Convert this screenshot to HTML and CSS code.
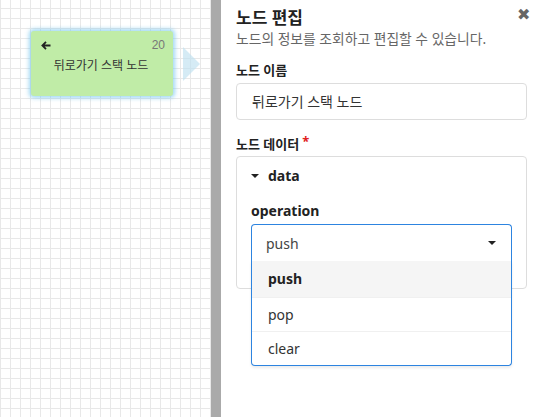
FILE: index.html
```html
<!DOCTYPE html>
<html lang="ko">
<head>
<meta charset="utf-8">
<link rel="stylesheet" href="styles.css">
</head>
<body>
<div class="app">
  <div class="canvas">
    <div class="node">
      <div class="node-top">
        <svg class="back" width="10" height="9" viewBox="0 0 10 9"><path d="M5 0.9 L1.4 4.5 L5 8.1 M1.4 4.5 H9.5" fill="none" stroke="#222" stroke-width="1.8"/></svg>
        <span class="node-num">20</span>
      </div>
      <div class="node-title">뒤로가기 스택 노드</div>
    </div>
    <div class="handle"></div>
  </div>
  <div class="divider"></div>
  <div class="panel">
    <div class="close">✖</div>
    <h1 class="title">노드 편집</h1>
    <p class="subtitle">노드의 정보를 조회하고 편집할 수 있습니다.</p>
    <label class="label">노드 이름</label>
    <div class="input">뒤로가기 스택 노드</div>
    <label class="label label-data">노드 데이터<span class="req">*</span></label>
    <div class="databox">
      <div class="data-head"><span class="caret-down"></span>data</div>
      <div class="field-label">operation</div>
      <div class="select">
        <div class="select-head"><span>push</span><span class="caret-down small"></span></div>
        <div class="menu">
          <div class="opt active">push</div>
          <div class="opt">pop</div>
          <div class="opt">clear</div>
        </div>
      </div>
    </div>
  </div>
</div>
</body>
</html>
```

FILE: styles.css
```css
* { box-sizing: border-box; }
html, body { margin: 0; padding: 0; }
body {
  width: 538px;
  height: 417px;
  overflow: hidden;
  font-family: "Noto Sans", "Noto Sans CJK KR", sans-serif;
  color: #222;
  background: #fff;
}
.app { display: flex; height: 417px; }
.canvas {
  position: relative;
  width: 211px;
  flex: none;
  background-color: #fff;
  background-image:
    linear-gradient(to right, #e8e8e8 1px, transparent 1px),
    linear-gradient(to bottom, #e8e8e8 1px, transparent 1px);
  background-size: 10px 10px;
  background-position: 0 8px;
}
.node {
  position: absolute;
  left: 31px;
  top: 31px;
  width: 142px;
  height: 65px;
  background: #c0eca7;
  border-radius: 3px;
  box-shadow: 0 0 4px 2px rgba(120, 200, 240, 0.7);
  padding: 9px 8px 0 10px;
}
.node-top { display: flex; justify-content: space-between; align-items: center; height: 10px; }
.back { display: block; }
.node-num { font-family: "Liberation Sans", Arial, sans-serif; font-size: 12px; color: #777; }
.node-title {
  text-align: center;
  font-size: 12px;
  line-height: 16px;
  color: #333;
  margin-top: 8px;
  padding-right: 4px;
}
.handle {
  position: absolute;
  left: 183px;
  top: 47px;
  width: 0;
  height: 0;
  border-top: 17px solid transparent;
  border-bottom: 17px solid transparent;
  border-left: 17px solid rgba(190, 225, 240, 0.65);
}
.divider { width: 10px; flex: none; background: #aaaaaa; }
.panel {
  position: relative;
  flex: 1;
  padding: 6px 11px 0 15px;
}
.close {
  position: absolute;
  right: 8px;
  top: 4px;
  font-size: 16px;
  color: #666;
  line-height: 20px;
}
.title {
  margin: 0;
  font-size: 17px;
  font-weight: 700;
  line-height: 24px;
  color: #222;
}
.subtitle {
  margin: 0;
  font-size: 13.8px;
  line-height: 18px;
  color: #666;
}
.label {
  display: block;
  margin-top: 13px;
  font-size: 13px;
  font-weight: 700;
  line-height: 18px;
  color: #222;
}
.req { color: #e02020; margin-left: 3px; position: relative; top: -3px; }
.input {
  margin-top: 4px;
  height: 37px;
  border: 1px solid #ddd;
  border-radius: 4px;
  padding: 0 15px;
  font-size: 14px;
  line-height: 35px;
  color: #333;
}
.label-data { margin-top: 15px; }
.databox {
  margin-top: 3px;
  height: 133px;
  border: 1px solid #ddd;
  border-radius: 4px;
  padding: 8px 14px 0 14px;
}
.data-head {
  display: flex;
  align-items: center;
  font-size: 14px;
  font-weight: 700;
  line-height: 22px;
  color: #222;
}
.caret-down {
  display: inline-block;
  width: 0;
  height: 0;
  border-left: 4px solid transparent;
  border-right: 4px solid transparent;
  border-top: 4px solid #222;
  margin-right: 9px;
}
.caret-down.small { margin-right: 0; }
.field-label {
  margin-top: 13px;
  font-size: 14px;
  font-weight: 700;
  line-height: 22px;
  color: #222;
}
.select {
  position: relative;
  margin-top: 2px;
}
.select-head {
  height: 37px;
  border: 1px solid #2d84e0;
  border-bottom: none;
  border-radius: 4px 4px 0 0;
  padding: 0 15px 0 14px;
  display: flex;
  align-items: center;
  justify-content: space-between;
  font-size: 14px;
  color: #444;
  background: #fff;
}
.menu {
  position: absolute;
  top: 100%;
  left: 0;
  right: 0;
  border: 1px solid #2d84e0;
  border-top: none;
  border-radius: 0 0 4px 4px;
  background: #fff;
  box-shadow: 0 2px 3px rgba(0, 0, 0, 0.08);
}
.opt {
  height: 34px;
  padding: 0 16px;
  font-size: 14px;
  line-height: 33px;
  color: #333;
  border-top: 1px solid #f0f0f0;
}
.opt:first-child { border-top: none; height: 36px; line-height: 36px; }
.opt.active { background: #f5f5f5; font-weight: 700; color: #222; }
```
